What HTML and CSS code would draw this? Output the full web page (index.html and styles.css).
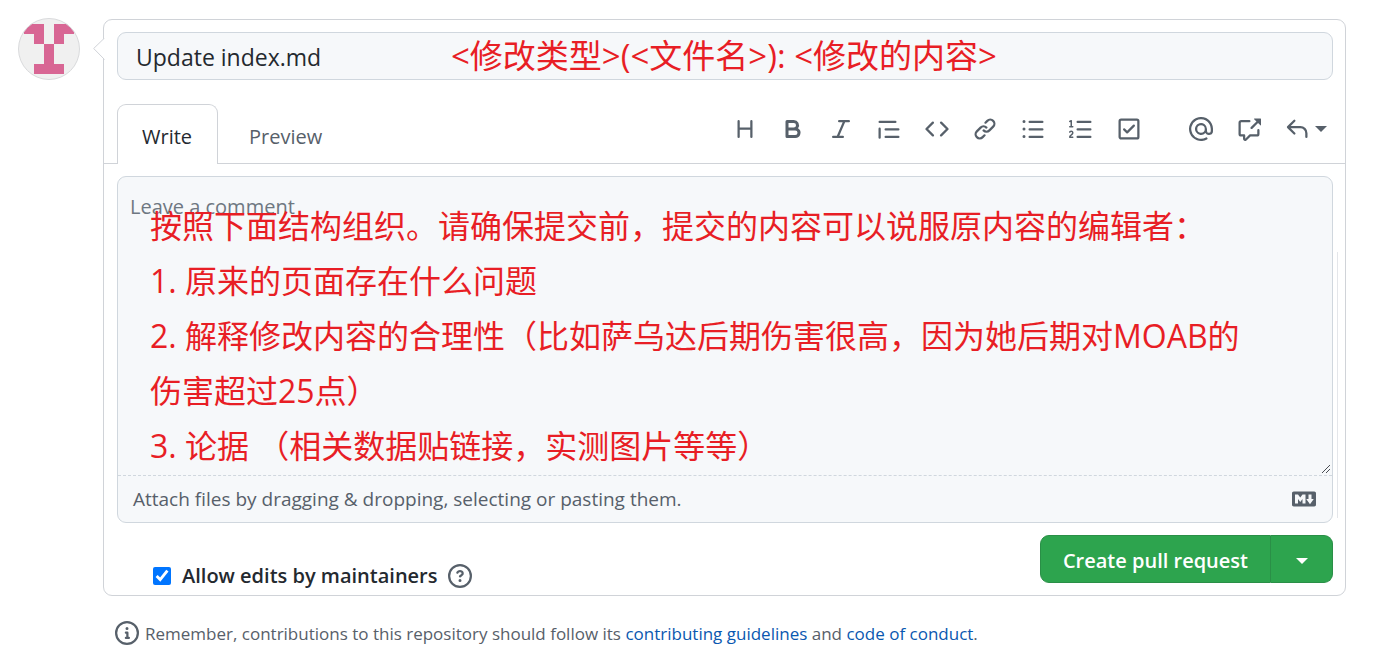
FILE: index.html
```html
<!DOCTYPE html>
<html lang="en">
<head>
<meta charset="utf-8">
<title>Open a pull request</title>
<meta name="viewport" content="width=device-width, initial-scale=1">
<link rel="stylesheet" href="styles.css">
</head>
<body>
<main class="page">
  <svg class="avatar" viewBox="0 0 62 62" role="img" aria-label="User avatar">
    <defs><clipPath id="round"><circle cx="31" cy="31" r="30.5"/></clipPath></defs>
    <circle cx="31" cy="31" r="30.5" fill="#f0f0f0"/>
    <path clip-path="url(#round)" fill="#d86694" d="M6 6h20v20h-10v-10h-10zM36 6h20v10h-10v10h-10zM26 26h10v20h10v10h-30v-10h10z"/>
    <circle cx="31" cy="31" r="30.5" fill="none" stroke="#d9dadc"/>
  </svg>

  <form class="compose">
    <section class="box">
      <svg class="pointer" viewBox="0 0 12 22" aria-hidden="true"><path d="M11.500 0L.7 10.500L11.500 21.500" fill="#fff" stroke="#d0d3d8"/><path d="M11.500 1v20" stroke="#fff"/></svg>

      <div class="title-row">
        <input class="title-input" type="text" aria-label="Title" value="Update index.md">
        <p class="note note-title" lang="zh-CN">&lt;修改类型&gt;(&lt;文件名&gt;): &lt;修改的内容&gt;</p>
      </div>

      <div class="tab-bar">
        <div class="tabs" role="tablist">
          <button class="tab tab-active" type="button" role="tab" aria-selected="true">Write</button>
          <button class="tab" type="button" role="tab" aria-selected="false">Preview</button>
        </div>
        <div class="toolbar" role="toolbar" aria-label="Formatting">
          <button class="tool" type="button" aria-label="Heading"><svg class="icon" viewBox="0 0 16 16"><path d="M3.750 2a.75.75 0 01.75.75V7h7V2.750a.75.75 0 011.500 0v10.500a.75.75 0 01-1.500 0V8.500h-7v4.750a.75.75 0 01-1.500 0V2.750A.75.75 0 013.750 2z"/></svg></button>
          <button class="tool" type="button" aria-label="Bold"><svg class="icon" viewBox="0 0 16 16"><path fill-rule="evenodd" d="M4 2a1 1 0 00-1 1v10a1 1 0 001 1h5.500a3.500 3.500 0 001.852-6.470A3.500 3.500 0 008.500 2H4zm4.500 5a1.500 1.500 0 100-3H5v3h3.500zM5 9v3h4.500a1.500 1.500 0 000-3H5z"/></svg></button>
          <button class="tool" type="button" aria-label="Italic"><svg class="icon" viewBox="0 0 16 16"><path d="M6 2.750A.75.75 0 016.750 2h6.500a.75.75 0 010 1.500h-2.505l-3.858 9H9.250a.75.75 0 010 1.500h-6.500a.75.75 0 010-1.500h2.505l3.858-9H6.750A.75.75 0 016 2.750z"/></svg></button>
          <button class="tool" type="button" aria-label="Quote"><svg class="icon" viewBox="0 0 16 16"><path d="M1.750 2.500a.75.75 0 000 1.500h10.500a.75.75 0 000-1.500H1.750zm4 5a.75.75 0 000 1.500h8.500a.75.75 0 000-1.500h-8.500zm0 5a.75.75 0 000 1.500h8.500a.75.75 0 000-1.500h-8.500zM2.500 7.750a.75.75 0 00-1.500 0v6a.75.75 0 001.500 0v-6z"/></svg></button>
          <button class="tool" type="button" aria-label="Code"><svg class="icon" viewBox="0 0 16 16"><path d="M4.720 3.220a.75.75 0 011.060 1.060L2.060 8l3.720 3.720a.75.75 0 11-1.060 1.060L.47 8.530a.75.75 0 010-1.060l4.250-4.250zm6.560 0a.75.75 0 10-1.060 1.060L13.940 8l-3.720 3.720a.75.75 0 101.060 1.060l4.250-4.250a.75.75 0 000-1.060l-4.250-4.250z"/></svg></button>
          <button class="tool" type="button" aria-label="Link"><svg class="icon" viewBox="0 0 16 16"><path d="M7.775 3.275a.75.75 0 001.060 1.060l1.250-1.250a2 2 0 112.830 2.830l-2.500 2.500a2 2 0 01-2.830 0 .75.75 0 00-1.060 1.060 3.500 3.500 0 004.950 0l2.500-2.500a3.500 3.500 0 00-4.950-4.950l-1.250 1.250zm-4.690 9.640a2 2 0 010-2.830l2.500-2.500a2 2 0 012.830 0 .75.75 0 001.060-1.060 3.500 3.500 0 00-4.950 0l-2.500 2.500a3.500 3.500 0 004.950 4.950l1.250-1.250a.75.75 0 00-1.060-1.060l-1.250 1.250a2 2 0 01-2.830 0z"/></svg></button>
          <button class="tool" type="button" aria-label="Bulleted list"><svg class="icon" viewBox="0 0 16 16"><path d="M2 4a1 1 0 100-2 1 1 0 000 2zm3.750-1.500a.75.75 0 000 1.500h8.500a.75.75 0 000-1.500h-8.500zm0 5a.75.75 0 000 1.500h8.500a.75.75 0 000-1.500h-8.500zm0 5a.75.75 0 000 1.500h8.500a.75.75 0 000-1.500h-8.500zM3 8a1 1 0 11-2 0 1 1 0 012 0zm-1 6a1 1 0 100-2 1 1 0 000 2z"/></svg></button>
          <button class="tool" type="button" aria-label="Numbered list"><svg class="icon" viewBox="0 0 16 16"><path d="M2.003 2.500a.5.5 0 00-.723-.447l-1.003.5a.5.5 0 00.446.895l.28-.14V6H.5a.5.5 0 000 1h2.006a.5.5 0 100-1h-.503V2.500zM5 3.250a.75.75 0 01.75-.75h8.500a.75.75 0 010 1.500h-8.500A.75.75 0 015 3.250zm0 5a.75.75 0 01.75-.75h8.500a.75.75 0 010 1.500h-8.500A.75.75 0 015 8.250zm0 5a.75.75 0 01.75-.75h8.500a.75.75 0 010 1.500h-8.500a.75.75 0 01-.75-.75zM.924 10.320l.003-.004a.851.851 0 01.144-.153A.66.66 0 011.500 10c.195 0 .306.068.374.146a.57.57 0 01.128.376c0 .453-.269.682-.8 1.078l-.035.025C.692 11.980 0 12.495 0 13.500a.5.5 0 00.5.5h2.003a.5.5 0 000-1H1.146c.132-.197.351-.372.654-.597l.047-.035c.47-.35 1.156-.858 1.156-1.845 0-.365-.118-.744-.377-1.038-.268-.303-.658-.484-1.126-.484-.48 0-.84.202-1.068.392a1.858 1.858 0 00-.348.384a.5.5 0 00.84.543z"/></svg></button>
          <button class="tool" type="button" aria-label="Task list"><svg class="icon" viewBox="0 0 16 16"><path fill-rule="evenodd" d="M2.500 2.750a.25.25 0 01.25-.25h10.500a.25.25 0 01.25.25v10.500a.25.25 0 01-.25.25H2.750a.25.25 0 01-.25-.25V2.750zM2.750 1A1.750 1.750 0 001 2.750v10.500c0 .966.784 1.750 1.750 1.750h10.500A1.750 1.750 0 0015 13.250V2.750A1.750 1.750 0 0013.250 1H2.750zm9.030 5.280a.75.75 0 00-1.060-1.060L6.750 9.190 5.280 7.720a.75.75 0 00-1.060 1.060l2 2a.75.75 0 001.060 0l4.500-4.500z"/></svg></button>
          <button class="tool tool-group" type="button" aria-label="Mention"><svg class="icon" viewBox="0 0 16 16"><path fill-rule="evenodd" d="M4.750 2.370a6.500 6.500 0 006.500 11.260.75.75 0 01.75 1.298 8 8 0 113.994-7.273.754.754 0 01.006.095v1.500a2.750 2.750 0 01-5.072 1.475A4 4 0 1112 8v1.250a1.250 1.250 0 002.500 0V7.867a6.500 6.500 0 00-9.750-5.496V2.370zM10.500 8a2.500 2.500 0 10-5 0 2.500 2.500 0 005 0z"/></svg></button>
          <button class="tool" type="button" aria-label="Cross reference"><svg class="icon" viewBox="0 0 16 16"><path d="M16 1.250v4.146a.25.25 0 01-.427.177L14.030 4.030l-3.750 3.750a.75.75 0 11-1.060-1.060l3.750-3.750-1.543-1.543A.25.25 0 0111.604 1h4.146a.25.25 0 01.25.25zM2.750 3.500a.25.25 0 00-.25.25v7.500c0 .138.112.25.25.25h2a.75.75 0 01.75.75v2.190l2.720-2.720a.75.75 0 01.53-.22h4.500a.25.25 0 00.25-.25v-2.500a.75.75 0 111.500 0v2.500A1.750 1.750 0 0113.250 13H9.060l-2.573 2.573A1.457 1.457 0 014 14.543V13H2.750A1.750 1.750 0 011 11.250v-7.500C1 2.784 1.784 2 2.750 2h5.500a.75.75 0 010 1.500h-5.500z"/></svg></button>
          <button class="tool" type="button" aria-label="Saved replies"><svg class="icon" viewBox="0 0 16 16"><path d="M6.780 1.970a.75.75 0 010 1.060L3.810 6h6.440A4.750 4.750 0 0115 10.750v2.500a.75.75 0 01-1.500 0v-2.500a3.250 3.250 0 00-3.250-3.250H3.810l2.970 2.970a.75.75 0 11-1.060 1.060L1.470 7.280a.75.75 0 010-1.060l4.250-4.250a.75.75 0 011.060 0z"/></svg><span class="caret"></span></button>
        </div>
      </div>

      <div class="editor">
        <div class="field">
          <textarea class="comment" aria-label="Comment" placeholder="Leave a comment"></textarea>
          <svg class="grip" viewBox="0 0 10 10" aria-hidden="true"><path d="M1 9L9 1M5 9L9 5" fill="none" stroke="#4a4e54"/></svg>
          <div class="attach">
            <span>Attach files by dragging &amp; dropping, selecting or pasting them.</span>
            <svg class="icon" viewBox="0 0 16 16" role="img" aria-label="Markdown is supported"><path fill-rule="evenodd" d="M14.850 3H1.150C.52 3 0 3.520 0 4.150v7.690C0 12.480.52 13 1.150 13h13.690c.64 0 1.150-.52 1.150-1.150v-7.700C16 3.520 15.480 3 14.850 3zM9 11H7V8L5.500 9.920 4 8v3H2V5h2l1.500 2L7 5h2v6zm2.990.5L9.500 8H11V5h2v3h1.500l-2.510 3.500z"/></svg>
          </div>
        </div>
        <div class="note note-body" lang="zh-CN">
          <p>按照下面结构组织。请确保提交前，提交的内容可以说服原内容的编辑者：</p>
          <p>1. 原来的页面存在什么问题</p>
          <p>2. 解释修改内容的合理性（比如萨乌达后期伤害很高，因为她后期对MOAB的<br>伤害超过25点）</p>
          <p>3. 论据 （相关数据贴链接，实测图片等等）</p>
        </div>
      </div>

      <div class="actions">
        <div class="allow">
          <input class="check" type="checkbox" id="allow" checked>
          <label for="allow">Allow edits by maintainers</label>
          <svg class="icon" viewBox="0 0 16 16" role="img" aria-label="Help"><path fill-rule="evenodd" d="M8 1.500a6.500 6.500 0 100 13 6.500 6.500 0 000-13zM0 8a8 8 0 1116 0A8 8 0 010 8zm9 3a1 1 0 11-2 0 1 1 0 012 0zM6.920 6.085c.081-.16.19-.299.34-.398.145-.097.371-.187.74-.187.28 0 .553.087.738.225A.613.613 0 019 6.250c0 .177-.04.264-.077.318a.956.956 0 01-.277.245c-.076.051-.158.1-.258.161l-.007.004a7.728 7.728 0 00-.313.195 2.416 2.416 0 00-.692.661.75.75 0 001.248.832.956.956 0 01.276-.245 6.300 6.300 0 01.26-.16l.006-.004c.093-.057.204-.123.313-.195.222-.149.487-.355.692-.662.214-.32.329-.702.329-1.150 0-.76-.36-1.348-.863-1.725A2.760 2.760 0 008 4c-.631 0-1.155.16-1.572.438-.413.276-.68.638-.849.977a.75.75 0 101.342.67z"/></svg>
        </div>
        <div class="submit">
          <button class="create" type="submit">Create pull request</button>
          <button class="more" type="button" aria-label="Select a type of pull request"><span class="caret"></span></button>
        </div>
      </div>
    </section>

    <p class="reminder">
      <svg class="icon" viewBox="0 0 16 16" aria-hidden="true"><path fill-rule="evenodd" d="M8 1.500a6.500 6.500 0 100 13 6.500 6.500 0 000-13zM0 8a8 8 0 1116 0A8 8 0 010 8zm6.500-.25A.75.75 0 017.250 7h1a.75.75 0 01.75.75v2.750h.25a.75.75 0 010 1.500h-2a.75.75 0 010-1.500h.25v-2h-.25a.75.75 0 01-.75-.75zM8 6a1 1 0 100-2 1 1 0 000 2z"/></svg>
      <span>Remember, contributions to this repository should follow its <a href="#guidelines">contributing guidelines</a> and <a href="#conduct">code of conduct</a>.</span>
    </p>
  </form>
</main>
</body>
</html>
```
FILE: styles.css
```css
* { box-sizing: border-box; }

body {
  margin: 0;
  background: #fff;
  color: #24292f;
  font-family: "Open Sans", "Noto Sans", "Noto Sans CJK SC", sans-serif;
  font-size: 19px;
}

p { margin: 0; }
button, input, textarea { font: inherit; color: inherit; }
button { border: 0; padding: 0; background: none; cursor: pointer; }

.page {
  display: flex;
  align-items: flex-start;
  gap: 23px;
  padding: 18px 34px 16px 18px;
}

.avatar { width: 62px; height: 62px; flex: none; }
.compose { flex: 1; min-width: 0; padding-top: 1px; }

.icon {
  display: block;
  width: 24px;
  height: 24px;
  flex: none;
  fill: #57606a;
}

.box {
  position: relative;
  border: 1px solid #d0d3d8;
  border-radius: 9px;
}

.pointer {
  position: absolute;
  left: -11px;
  top: 18px;
  width: 12px;
  height: 22px;
}

.title-row { position: relative; padding: 12px 12px 24px 13px; }

.title-input {
  display: block;
  width: 100%;
  height: 48px;
  padding: 2px 18px 0;
  border: 1px solid #d0d7de;
  border-radius: 9px;
  background: #f6f8fa;
  font-size: 23px;
}

/* Red guidance laid over the form */
.note {
  position: absolute;
  color: #e81e25;
  pointer-events: none;
  white-space: nowrap;
}
.note-title { left: 347px; top: 12px; font-size: 33px; line-height: 48px; }
.note-body { left: 46px; top: 34px; font-size: 32px; line-height: 55px; }

.tab-bar {
  display: flex;
  justify-content: space-between;
  height: 60px;
  padding: 0 12px 0 13px;
  border-bottom: 1px solid #d0d3d8;
}
.tabs { display: flex; height: 60px; }
.tab {
  padding: 4px 30px 0;
  border: 1px solid transparent;
  border-bottom: 0;
  border-radius: 9px 9px 0 0;
  color: #57606a;
  font-size: 20px;
}
.tab-active {
  padding: 4px 25px 0 24px;
  border-color: #d0d3d8;
  background: #fff;
  color: #24292f;
}

.toolbar { display: flex; gap: 24px; padding: 13px 6px 0 0; height: 37px; }
.tool { display: flex; align-items: center; }
.tool-group { margin-left: 24px; }

.caret {
  border: 6px solid transparent;
  border-top-color: currentColor;
  border-bottom: 0;
}
.tool .caret { color: #57606a; margin-left: 6px; }

.editor { position: relative; padding: 12px 12px 0 13px; }
.editor::after {
  content: "";
  position: absolute;
  top: 88px;
  right: 7px;
  bottom: 5px;
  width: 1px;
  background: #e4e6ea;
}

.field {
  position: relative;
  border: 1px solid #d0d7de;
  border-radius: 9px;
  background: #f6f8fa;
}
.comment {
  display: block;
  width: 100%;
  height: 299px;
  padding: 16px 12px;
  border: 0;
  border-bottom: 1px dashed #d0d7de;
  border-radius: 9px 9px 0 0;
  background: transparent;
  font-size: 20px;
  resize: none;
}
.comment::placeholder { color: #6e7781; opacity: 1; }
.grip { position: absolute; right: 1px; top: 287px; width: 10px; height: 10px; }

.attach {
  display: flex;
  align-items: center;
  justify-content: space-between;
  height: 46px;
  padding: 0 16px 0 15px;
  color: #57606a;
}

.actions {
  display: flex;
  align-items: flex-start;
  justify-content: space-between;
  padding: 12px 12px 6px 49px;
}
.allow {
  display: flex;
  align-items: center;
  gap: 11px;
  padding-top: 27px;
  font-size: 20px;
  font-weight: 600;
}
.check { width: 18px; height: 18px; margin: 0; accent-color: #0075ff; }

.submit { display: flex; height: 48px; color: #fff; }
.create, .more {
  border: 1px solid #2a8f47;
  background: #2da44e;
}
.create {
  padding: 2px 22px 0;
  border-radius: 9px 0 0 9px;
  font-size: 20px;
  font-weight: 600;
}
.more {
  display: flex;
  align-items: center;
  justify-content: center;
  width: 62px;
  padding-top: 4px;
  border-left: 0;
  border-radius: 0 9px 9px 0;
}

.reminder {
  display: flex;
  align-items: center;
  gap: 6px;
  padding: 25px 12px 0;
  color: #57606a;
  font-size: 17px;
}
.reminder a { color: #0a58b0; text-decoration: none; }
```
